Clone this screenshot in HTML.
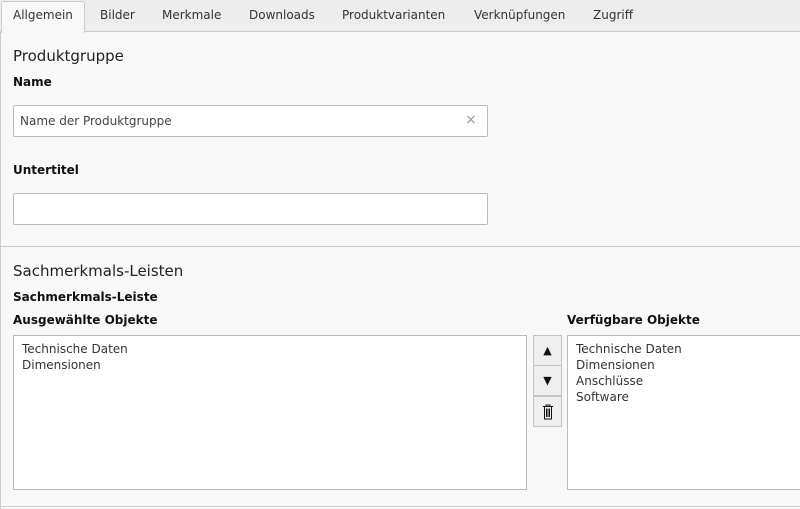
<!DOCTYPE html>
<html><head><style>
*{margin:0;padding:0;box-sizing:border-box}
body{width:800px;height:509px;background:#f8f8f8;font-family:"DejaVu Sans","Liberation Sans",sans-serif;font-size:12px;color:#333;position:relative;overflow:hidden}
.a{position:absolute}
.tabs{left:0;top:0;width:800px;height:32px;background:#ededed;border-bottom:1px solid #ccc}
.tab{top:8px;font-size:12px;color:#333}
.act{left:1px;top:1px;width:84px;height:32px;background:#f8f8f8;border:1px solid #ccc;border-bottom:none;border-radius:3px 3px 0 0}
h2{position:absolute;font-weight:normal;font-size:15px;color:#222}
.lb{font-weight:bold;font-size:12px;color:#111}
.in{background:#fff;border:1px solid #bbb;border-radius:2px}
.sel{background:#fff;border:1px solid #bbb;padding:5px 8px;line-height:16px;font-size:12px;color:#333}
.btn{left:533px;width:29px;height:31px;background:#eee;border:1px solid #c4c4c4;text-align:center;line-height:29px;font-size:11px;color:#111}
</style></head><body>
<div class="a tabs"></div>
<div class="a act"></div>
<div class="a tab" style="left:13px">Allgemein</div>
<div class="a tab" style="left:100px">Bilder</div>
<div class="a tab" style="left:162px">Merkmale</div>
<div class="a tab" style="left:249px">Downloads</div>
<div class="a tab" style="left:342px">Produktvarianten</div>
<div class="a tab" style="left:474px">Verknüpfungen</div>
<div class="a tab" style="left:593px">Zugriff</div>
<div class="a" style="left:0;top:32px;width:1px;height:477px;background:#ccc"></div>
<h2 style="left:13px;top:47px">Produktgruppe</h2>
<div class="a lb" style="left:13px;top:75px">Name</div>
<div class="a in" style="left:13px;top:105px;width:475px;height:32px"></div>
<div class="a" style="left:20px;top:114px;color:#444">Name der Produktgruppe</div>
<div class="a" style="left:465px;top:112px;color:#999;font-size:14px">×</div>
<div class="a lb" style="left:13px;top:163px">Untertitel</div>
<div class="a in" style="left:13px;top:193px;width:475px;height:32px"></div>
<div class="a" style="left:0;top:246px;width:800px;height:1px;background:#ccc"></div>
<h2 style="left:13px;top:262px">Sachmerkmals-Leisten</h2>
<div class="a lb" style="left:13px;top:290px">Sachmerkmals-Leiste</div>
<div class="a lb" style="left:13px;top:313px">Ausgewählte Objekte</div>
<div class="a lb" style="left:567px;top:313px">Verfügbare Objekte</div>
<div class="a sel" style="left:13px;top:335px;width:514px;height:155px">Technische Daten<br>Dimensionen</div>
<div class="a btn" style="top:335px">▲</div>
<div class="a btn" style="top:365px">▼</div>
<div class="a btn" style="top:396px">
<svg width="12" height="16" viewBox="0 0 12 16" style="margin-top:7px"><path d="M1 2.5h10M4 2.5V1h4v1.5M2.5 2.5V15h7V2.5M4.5 4.5v8.5M6 4.5v8.5M7.5 4.5v8.5" fill="none" stroke="#111" stroke-width="1"/></svg></div>
<div class="a sel" style="left:567px;top:335px;width:240px;height:155px">Technische Daten<br>Dimensionen<br>Anschlüsse<br>Software</div>
<div class="a" style="left:0;top:506px;width:800px;height:1px;background:#ccc"></div>
</body></html>
